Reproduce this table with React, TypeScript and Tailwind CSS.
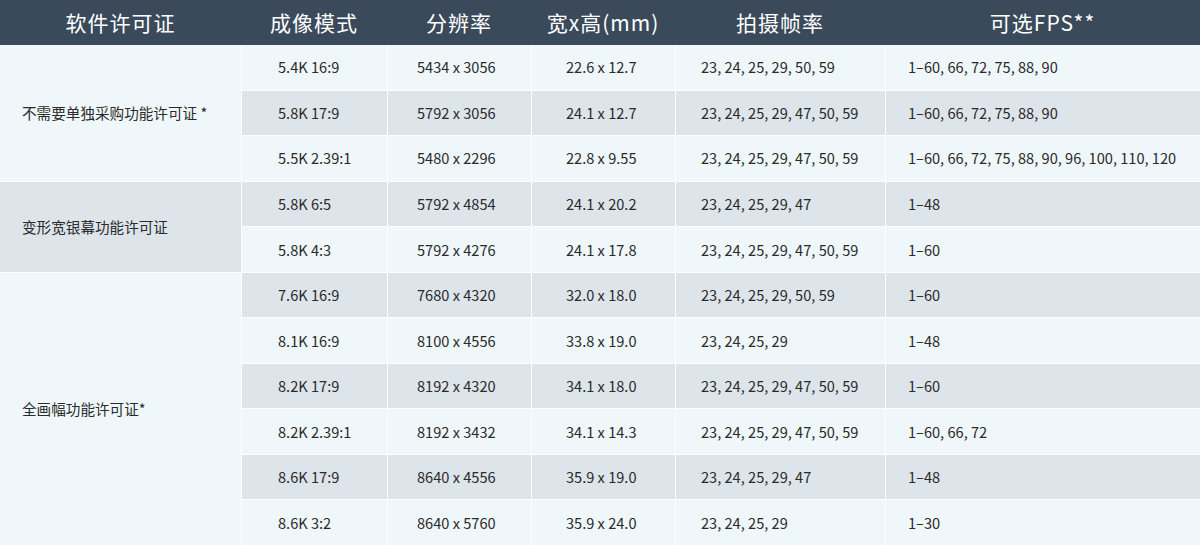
const headers = ["软件许可证", "成像模式", "分辨率", "宽x高(mm)", "拍摄帧率", "可选FPS**"];

type Row = [string, string, string, string, string];

const groups: { label: string; tone: "light" | "dark"; rows: Row[] }[] = [
  {
    label: "不需要单独采购功能许可证 *",
    tone: "light",
    rows: [
      ["5.4K 16:9", "5434 x 3056", "22.6 x 12.7", "23, 24, 25, 29, 50, 59", "1–60, 66, 72, 75, 88, 90"],
      ["5.8K 17:9", "5792 x 3056", "24.1 x 12.7", "23, 24, 25, 29, 47, 50, 59", "1–60, 66, 72, 75, 88, 90"],
      ["5.5K 2.39:1", "5480 x 2296", "22.8 x 9.55", "23, 24, 25, 29, 47, 50, 59", "1–60, 66, 72, 75, 88, 90, 96, 100, 110, 120"],
    ],
  },
  {
    label: "变形宽银幕功能许可证",
    tone: "dark",
    rows: [
      ["5.8K 6:5", "5792 x 4854", "24.1 x 20.2", "23, 24, 25, 29, 47", "1–48"],
      ["5.8K 4:3", "5792 x 4276", "24.1 x 17.8", "23, 24, 25, 29, 47, 50, 59", "1–60"],
    ],
  },
  {
    label: "全画幅功能许可证*",
    tone: "light",
    rows: [
      ["7.6K 16:9", "7680 x 4320", "32.0 x 18.0", "23, 24, 25, 29, 50, 59", "1–60"],
      ["8.1K 16:9", "8100 x 4556", "33.8 x 19.0", "23, 24, 25, 29", "1–48"],
      ["8.2K 17:9", "8192 x 4320", "34.1 x 18.0", "23, 24, 25, 29, 47, 50, 59", "1–60"],
      ["8.2K 2.39:1", "8192 x 3432", "34.1 x 14.3", "23, 24, 25, 29, 47, 50, 59", "1–60, 66, 72"],
      ["8.6K 17:9", "8640 x 4556", "35.9 x 19.0", "23, 24, 25, 29, 47", "1–48"],
      ["8.6K 3:2", "8640 x 5760", "35.9 x 24.0", "23, 24, 25, 29", "1–30"],
    ],
  },
];

const cellPad = ["pl-[36px]", "pl-[29px]", "pl-[34px]", "pl-[25px]", "pl-[22px]"];

export default function App() {
  let rowIndex = 0;
  return (
    <div
      className="w-[1200px] h-[545px] overflow-hidden bg-white text-[#2a2a2a]"
      style={{ fontFamily: '"Noto Sans CJK SC", "Noto Sans", sans-serif' }}
    >
      <div className="grid h-[45px] grid-cols-[241px_146px_144px_144px_210px_1fr] bg-[#3a4a5b] text-[21px] tracking-[1px] text-white">
        {headers.map((h) => (
          <div key={h} className="flex items-center justify-center">
            {h}
          </div>
        ))}
      </div>

      <div className="grid h-[500px] grid-cols-[241px_145px_143px_143px_209px_1fr] auto-rows-fr gap-px bg-white text-[14.6px]">
        {groups.map((g) => {
          const start = rowIndex;
          return (
            <>
              <div
                key={g.label}
                className={`flex items-center pl-[22px] ${
                  g.tone === "light" ? "bg-[#eff7fa]" : "bg-[#dde4ea]"
                }`}
                style={{ gridRow: `${start + 1} / span ${g.rows.length}`, gridColumn: 1 }}
              >
                {g.label}
              </div>
              {g.rows.map((r) => {
                const i = rowIndex++;
                const bg = i % 2 === 0 ? "bg-[#eff7fa]" : "bg-[#dde4ea]";
                return r.map((c, ci) => (
                  <div
                    key={`${i}-${ci}`}
                    className={`flex items-center ${cellPad[ci]} ${bg}`}
                    style={{ gridRow: i + 1, gridColumn: ci + 2 }}
                  >
                    {c}
                  </div>
                ));
              })}
            </>
          );
        })}
      </div>
    </div>
  );
}
